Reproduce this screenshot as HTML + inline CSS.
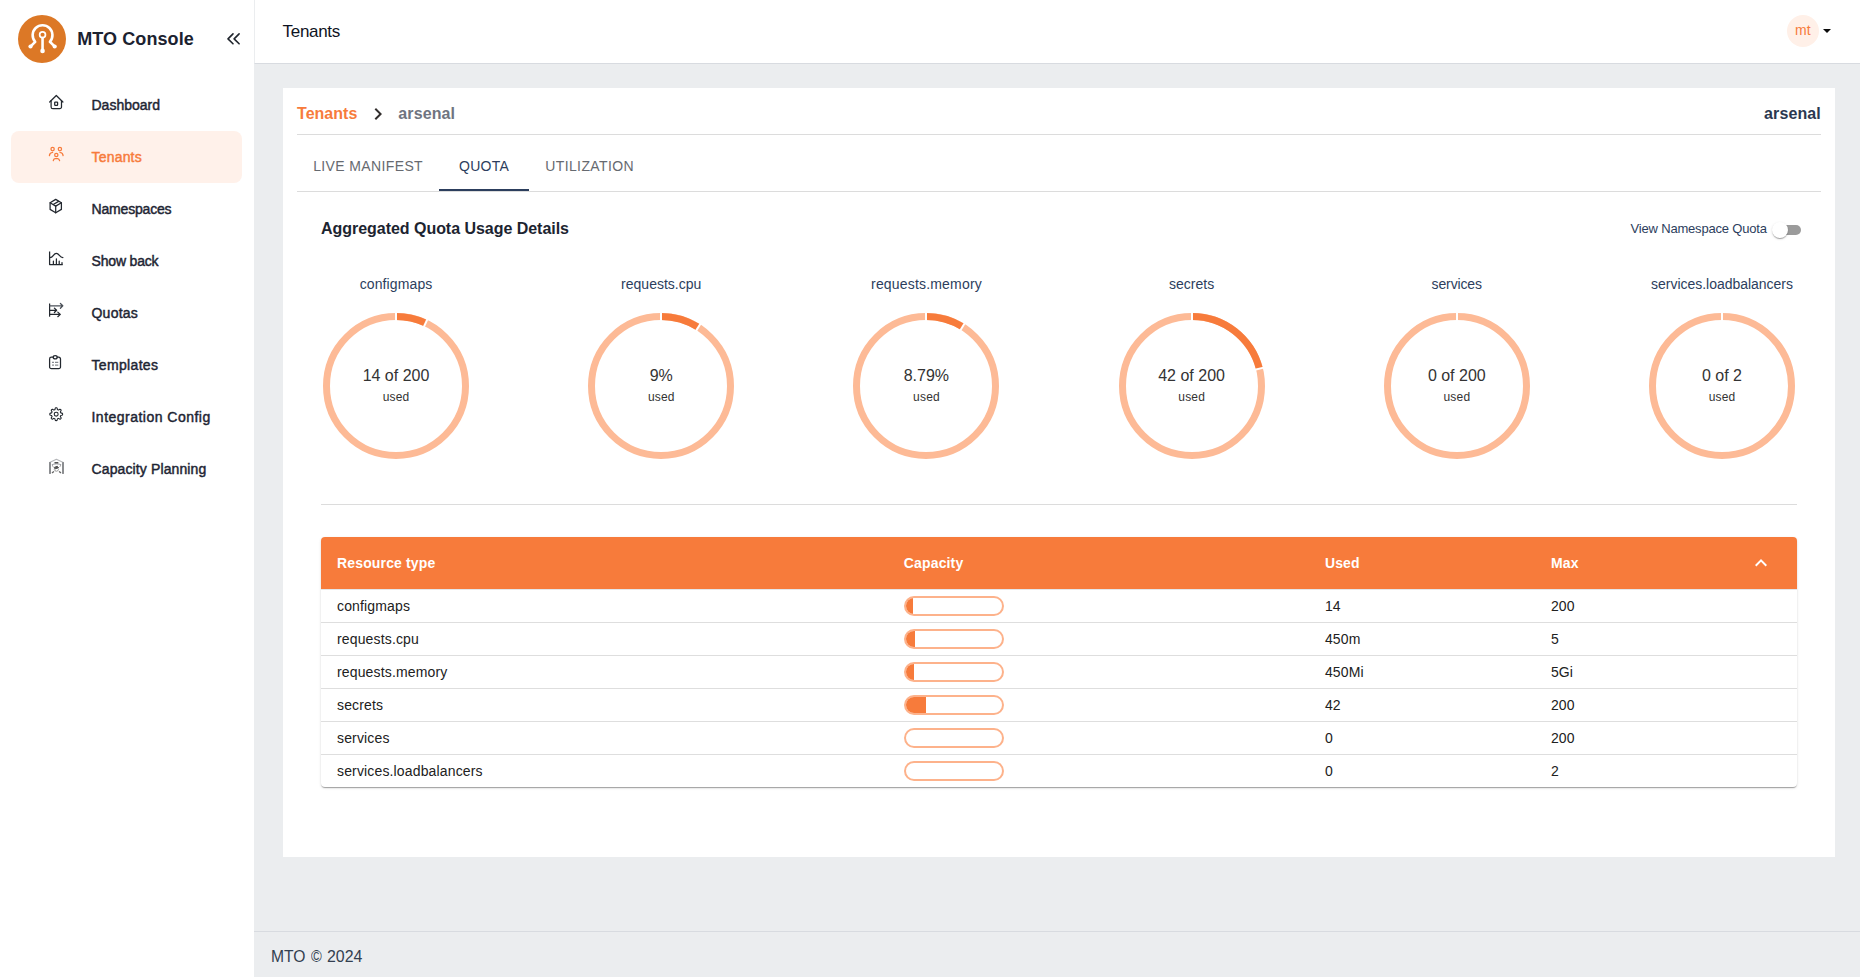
<!DOCTYPE html>
<html lang="en">
<head>
<meta charset="utf-8">
<title>MTO Console</title>
<style>
*{box-sizing:border-box;margin:0;padding:0}
html,body{width:1860px;height:977px;overflow:hidden}
body{font-family:"Liberation Sans",sans-serif;background:#ebedef;color:#1f2937;position:relative}
.abs{position:absolute}
.t{position:absolute;white-space:nowrap;line-height:1}
#sidebar{position:absolute;left:0;top:0;width:254px;height:977px;background:#fff}
#logo{position:absolute;left:18px;top:15px;width:48px;height:48px}
#navactive{position:absolute;left:11px;top:131px;width:231px;height:52px;border-radius:8px;background:#fff1ea}
#header{position:absolute;left:254px;top:0;width:1606px;height:64px;background:#fff;border-bottom:1px solid #d8dbe0;border-left:1px solid #ebedef}
#avatar{position:absolute;left:1787px;top:15px;width:32px;height:32px;border-radius:50%;background:#fff0e8}
#caret{position:absolute;left:1822.7px;top:29px;width:0;height:0;border-left:4.2px solid transparent;border-right:4.2px solid transparent;border-top:4.2px solid #0b0b0b}
#footer{position:absolute;left:254px;top:931px;width:1606px;height:46px;border-top:1px solid #d8dbe0}
#card{position:absolute;left:283px;top:88px;width:1552px;height:769px;background:#fff}
.hr{position:absolute;height:1px;background:#dcdcdc}
#ind{position:absolute;left:439px;top:189px;width:90px;height:2px;background:#2c3e5d}
#track{position:absolute;left:1775px;top:225px;width:26px;height:10px;border-radius:5px;background:#9b9b9b}
#thumb{position:absolute;left:1772px;top:222px;width:16px;height:16px;border-radius:50%;background:#fff;box-shadow:0 2px 1px -1px rgba(0,0,0,.2),0 1px 1px 0 rgba(0,0,0,.14),0 1px 3px 0 rgba(0,0,0,.12)}
#table{position:absolute;left:321px;top:537px;width:1476px;height:250px;background:#fff;border-radius:4px;box-shadow:0 2px 1px -1px rgba(0,0,0,.2),0 1px 1px 0 rgba(0,0,0,.14),0 1px 3px 0 rgba(0,0,0,.12);overflow:hidden}
#thead{position:absolute;left:0;top:0;width:1476px;height:52px;background:#f77b3b}
.rl{position:absolute;left:0;width:1476px;height:1px;background:#dedede}
.bar{position:absolute;left:904px;width:100px;height:20px;border:2px solid #fdb28b;border-radius:10px;overflow:hidden;background:#fff}
</style>
</head>
<body>
<div id="sidebar"></div>
<svg id="logo" viewBox="0 0 48 48"><circle cx="24" cy="24" r="24" fill="#dc7826"/><g fill="none" stroke="#fff" stroke-linecap="round" stroke-linejoin="round"><path d="M12.6 31.4L17.2 26.8A9.9 9.9 0 1 1 31.9 26.8L36.6 31.4" stroke-width="2.6"/><circle cx="24.55" cy="19.8" r="2.9" stroke-width="1.7"/><path d="M24.55 23V35.6" stroke-width="2.6"/></g><g fill="#fff"><circle cx="12.5" cy="31.5" r="2.1"/><circle cx="36.7" cy="31.5" r="2.1"/><circle cx="24.55" cy="35.9" r="2.3"/></g></svg>
<svg class="abs" style="left:226px;top:32px" width="16" height="14" viewBox="0 0 16 14" fill="none" stroke="#20252d" stroke-width="1.6" stroke-linecap="round" stroke-linejoin="round"><path d="M7 1.9L2 6.85L7 11.8"/><path d="M13.1 1.9L8.1 6.85L13.1 11.8"/></svg>
<div id="navactive"></div>
<svg class="abs" style="left:0;top:0" width="254" height="500" viewBox="0 0 254 500" fill="none" stroke-linecap="round" stroke-linejoin="round"><g stroke="#23282f" stroke-width="1.25"><path d="M49.7 102L56.3 95.5L62.9 102"/><path d="M51.1 100.6V106.9a1.8 1.8 0 0 0 1.8 1.8h6.8a1.8 1.8 0 0 0 1.8-1.8V100.6"/><rect x="54.7" y="102" width="2.9" height="3.3" rx="0.6"/></g><g stroke="#f77b3b" stroke-width="1.25"><circle cx="52.6" cy="149.1" r="1.65"/><circle cx="59.9" cy="149.1" r="1.65"/><circle cx="56.3" cy="154.9" r="1.65"/><path d="M49.4 155.6a3.3 3.3 0 0 1 3.2-3.1"/><path d="M60 152.5a3.3 3.3 0 0 1 3.1 3.1"/><path d="M53.3 160.7C53.5 159.2 54 158.5 55 158.5H57.7C58.7 158.5 59.3 159.2 59.6 160.7"/></g><g stroke="#23282f" stroke-width="1.25"><path d="M55.7 199.4L61.4 202.8V209.4L55.7 212.8L50.1 209.4V202.8Z"/><path d="M50.1 202.8L55.7 206.1L61.4 202.8"/><path d="M55.7 206.1V212.8"/><path d="M53.6 204.3L58.6 201.4"/></g><g stroke="#23282f" stroke-width="1.25"><path d="M49.6 251.6V264.6H62.7" stroke-linecap="butt"/><path d="M49.8 257.6C53.6 257.6 53.2 253.4 56.3 253.4C59.4 253.4 59.4 257.6 62.9 257.6"/><path d="M53.4 261.2V264.2M56.4 258.8V264.2M59.2 261.2V264.2M62 262.6V264.2"/></g><g stroke="#23282f" stroke-width="1.25"><path d="M49.6 303.5V316.7" stroke-linecap="butt"/><path d="M50 305.8H62.6M60.4 303.5L62.8 305.8L60.4 308.3" stroke="#4b5058"/><path d="M50 310.3H56.4M54.4 308.1L56.6 310.3L54.4 312.5"/><path d="M50 314.4H60.2M57.8 312.1L60.3 314.4L57.8 316.7"/></g><g stroke="#23282f" stroke-width="1.25"><path d="M53.2 357.2H51.4a1.8 1.8 0 0 0-1.8 1.8v7.9a1.8 1.8 0 0 0 1.8 1.8h7.3a1.8 1.8 0 0 0 1.8-1.8v-7.9a1.8 1.8 0 0 0-1.8-1.8H57.2"/><ellipse cx="55.2" cy="357.2" rx="2" ry="1.7"/><path d="M52.4 362.3H53.6M55.4 362.3H57.9M52.4 365.1H53.6M55.4 365.1H57.9" stroke-width="1" stroke="#6a6f76"/></g><g stroke="#23282f" stroke-width="1.08"><path d="M56.20 407.80L56.62 407.81L57.02 407.98L57.28 408.76L57.45 409.54L57.71 409.75L58.00 409.86L58.28 409.98L58.61 410.02L59.28 409.59L60.02 409.22L60.42 409.39L60.73 409.67L61.01 409.98L61.18 410.38L60.81 411.12L60.38 411.79L60.42 412.12L60.54 412.40L60.65 412.69L60.86 412.95L61.64 413.12L62.42 413.38L62.59 413.78L62.60 414.20L62.59 414.62L62.42 415.02L61.64 415.28L60.86 415.45L60.65 415.71L60.54 416.00L60.42 416.28L60.38 416.61L60.81 417.28L61.18 418.02L61.01 418.42L60.73 418.73L60.42 419.01L60.02 419.18L59.28 418.81L58.61 418.38L58.28 418.42L58.00 418.54L57.71 418.65L57.45 418.86L57.28 419.64L57.02 420.42L56.62 420.59L56.20 420.60L55.78 420.59L55.38 420.42L55.12 419.64L54.95 418.86L54.69 418.65L54.40 418.54L54.12 418.42L53.79 418.38L53.12 418.81L52.38 419.18L51.98 419.01L51.67 418.73L51.39 418.42L51.22 418.02L51.59 417.28L52.02 416.61L51.98 416.28L51.86 416.00L51.75 415.71L51.54 415.45L50.76 415.28L49.98 415.02L49.81 414.62L49.80 414.20L49.81 413.78L49.98 413.38L50.76 413.12L51.54 412.95L51.75 412.69L51.86 412.40L51.98 412.12L52.02 411.79L51.59 411.12L51.22 410.38L51.39 409.98L51.67 409.67L51.98 409.39L52.38 409.22L53.12 409.59L53.79 410.02L54.12 409.98L54.40 409.86L54.69 409.75L54.95 409.54L55.12 408.76L55.38 407.98L55.78 407.81Z" stroke-linejoin="round"/><circle cx="56.2" cy="414.2" r="1.95"/></g><g stroke="#77797d" stroke-width="1.2"><path d="M49.6 462.4L56.4 459.3L63.3 462.4" stroke="#b4b6b9" stroke-width="1.1"/><path d="M50 462.8V473.2" stroke-width="1.7"/><path d="M63 462.8V473.2" stroke-width="1.7"/><path d="M52.2 464.6C54 463.6 59 463.6 60.8 464.6" stroke="#9a9da2" stroke-width="1"/><path d="M55 462.8H57.8" stroke-width="1.4" stroke="#555"/><path d="M54.4 467.4L57.2 466.2L58.6 467.8L55.4 468.8Z" fill="#555" stroke="#555" stroke-width="1"/><path d="M54.2 469.6a2.3 2.3 0 0 0 4.4 0" stroke="#999" stroke-width="1"/><path d="M52.4 472.6L53.6 471.8M60.6 472.6L59.4 471.8" stroke="#666" stroke-width="1.3"/><path d="M52.4 465.2L53 466.6M60.6 465.2L60 466.6" stroke="#aaa" stroke-width="1"/></g></svg>
<div id="header"></div>
<div id="avatar"></div>
<div id="caret"></div>
<div id="card"></div>
<div id="footer"></div>
<div class="hr" style="left:297px;top:134px;width:1524px"></div>
<svg class="abs" style="left:366.2px;top:102px" width="24" height="24" viewBox="0 0 24 24"><path fill="#322e2d" d="M10 6 8.59 7.41 13.17 12l-4.58 4.59L10 18l6-6z"/></svg>
<div class="hr" style="left:297px;top:191px;width:1524px"></div>
<div id="ind"></div>
<div id="track"></div><div id="thumb"></div>
<svg class="abs" style="left:316.0px;top:305.7px" width="160" height="160" viewBox="0 0 160 160"><circle cx="80" cy="80" r="69.5" fill="none" stroke="#fdba96" stroke-width="7"/><path d="M80.00 10.50A69.5 69.5 0 0 1 109.59 17.11" fill="none" stroke="#f77b3b" stroke-width="7"/><line x1="80.00" y1="15.00" x2="80.00" y2="6.00" stroke="#fff" stroke-width="2"/><line x1="107.68" y1="21.19" x2="111.51" y2="13.04" stroke="#fff" stroke-width="2"/></svg><svg class="abs" style="left:581.2px;top:305.7px" width="160" height="160" viewBox="0 0 160 160"><circle cx="80" cy="80" r="69.5" fill="none" stroke="#fdba96" stroke-width="7"/><path d="M80.00 10.50A69.5 69.5 0 0 1 117.24 21.32" fill="none" stroke="#f77b3b" stroke-width="7"/><line x1="80.00" y1="15.00" x2="80.00" y2="6.00" stroke="#fff" stroke-width="2"/><line x1="114.83" y1="25.12" x2="119.65" y2="17.52" stroke="#fff" stroke-width="2"/></svg><svg class="abs" style="left:846.4px;top:305.7px" width="160" height="160" viewBox="0 0 160 160"><circle cx="80" cy="80" r="69.5" fill="none" stroke="#fdba96" stroke-width="7"/><path d="M80.00 10.50A69.5 69.5 0 0 1 116.46 20.83" fill="none" stroke="#f77b3b" stroke-width="7"/><line x1="80.00" y1="15.00" x2="80.00" y2="6.00" stroke="#fff" stroke-width="2"/><line x1="114.10" y1="24.66" x2="118.82" y2="17.00" stroke="#fff" stroke-width="2"/></svg><svg class="abs" style="left:1111.6px;top:305.7px" width="160" height="160" viewBox="0 0 160 160"><circle cx="80" cy="80" r="69.5" fill="none" stroke="#fdba96" stroke-width="7"/><path d="M80.00 10.50A69.5 69.5 0 0 1 147.32 62.72" fill="none" stroke="#f77b3b" stroke-width="7"/><line x1="80.00" y1="15.00" x2="80.00" y2="6.00" stroke="#fff" stroke-width="2"/><line x1="142.96" y1="63.84" x2="151.68" y2="61.60" stroke="#fff" stroke-width="2"/></svg><svg class="abs" style="left:1376.8px;top:305.7px" width="160" height="160" viewBox="0 0 160 160"><circle cx="80" cy="80" r="69.5" fill="none" stroke="#fdba96" stroke-width="7"/><line x1="80.00" y1="15.00" x2="80.00" y2="6.00" stroke="#fff" stroke-width="2"/></svg><svg class="abs" style="left:1642.0px;top:305.7px" width="160" height="160" viewBox="0 0 160 160"><circle cx="80" cy="80" r="69.5" fill="none" stroke="#fdba96" stroke-width="7"/><line x1="80.00" y1="15.00" x2="80.00" y2="6.00" stroke="#fff" stroke-width="2"/></svg>
<div class="hr" style="left:321px;top:504px;width:1476px"></div>
<div id="table"><div id="thead"></div>
<div class="rl" style="top:85px"></div><div class="rl" style="top:118px"></div><div class="rl" style="top:151px"></div><div class="rl" style="top:184px"></div><div class="rl" style="top:217px"></div>
<div class="rl" style="top:52px;background:#e4e6e8"></div>
</div>
<svg class="abs" style="left:1749px;top:551px" width="24" height="24" viewBox="0 0 24 24"><path fill="#fff" d="M7.41 15.41 12 10.83l4.59 4.58L18 14l-6-6-6 6z"/></svg>
<div class="bar" style="top:596px"><div style="position:absolute;left:0;top:0;height:16px;width:6.72px;background:#f77b3b"></div></div>
<div class="bar" style="top:629px"><div style="position:absolute;left:0;top:0;height:16px;width:8.64px;background:#f77b3b"></div></div>
<div class="bar" style="top:662px"><div style="position:absolute;left:0;top:0;height:16px;width:8.44px;background:#f77b3b"></div></div>
<div class="bar" style="top:695px"><div style="position:absolute;left:0;top:0;height:16px;width:20.16px;background:#f77b3b"></div></div>
<div class="bar" style="top:728px"></div>
<div class="bar" style="top:761px"></div>
<div class="t" style="left:77.30px;top:30px;font-size:18px;color:#1b2230;font-weight:700;letter-spacing:0.081px;">MTO Console</div>
<div class="t" style="left:91.50px;top:98px;font-size:14px;color:#1e2533;-webkit-text-stroke:0.45px #1e2533;">Dashboard</div>
<div class="t" style="left:91.50px;top:150px;font-size:14px;color:#f77b3b;letter-spacing:0.192px;-webkit-text-stroke:0.45px #f77b3b;">Tenants</div>
<div class="t" style="left:91.50px;top:202px;font-size:14px;color:#1e2533;letter-spacing:-0.178px;-webkit-text-stroke:0.45px #1e2533;">Namespaces</div>
<div class="t" style="left:91.50px;top:254px;font-size:14px;color:#1e2533;letter-spacing:-0.173px;-webkit-text-stroke:0.45px #1e2533;">Show back</div>
<div class="t" style="left:91.50px;top:306px;font-size:14px;color:#1e2533;letter-spacing:0.232px;-webkit-text-stroke:0.45px #1e2533;">Quotas</div>
<div class="t" style="left:91.50px;top:358px;font-size:14px;color:#1e2533;letter-spacing:0.336px;-webkit-text-stroke:0.45px #1e2533;">Templates</div>
<div class="t" style="left:91.50px;top:410px;font-size:14px;color:#1e2533;letter-spacing:0.481px;-webkit-text-stroke:0.45px #1e2533;">Integration Config</div>
<div class="t" style="left:91.50px;top:462px;font-size:14px;color:#1e2533;letter-spacing:0.121px;-webkit-text-stroke:0.45px #1e2533;">Capacity Planning</div>
<div class="t" style="left:282.60px;top:23px;font-size:17px;color:#0e1322;letter-spacing:-0.324px;">Tenants</div>
<div class="t" style="left:1795.00px;top:23px;font-size:14px;color:#f77b3b;letter-spacing:0.037px;">mt</div>
<div class="t" style="left:271.00px;top:948px;font-size:17px;color:#333f50;transform:scaleX(0.9208);transform-origin:0 0;">MTO</div>
<div class="t" style="left:310.60px;top:948px;font-size:17px;color:#333f50;transform:scaleX(0.8618);transform-origin:0 0;">©</div>
<div class="t" style="left:326.80px;top:948px;font-size:17px;color:#333f50;transform:scaleX(0.9358);transform-origin:0 0;">2024</div>
<div class="t" style="left:297.10px;top:106px;font-size:16px;color:#f77b3b;font-weight:700;letter-spacing:0.007px;">Tenants</div>
<div class="t" style="left:398.30px;top:106px;font-size:16px;color:#6f7480;font-weight:700;letter-spacing:0.109px;">arsenal</div>
<div class="t" style="left:1764.00px;top:106px;font-size:16px;color:#2b3850;font-weight:700;letter-spacing:0.126px;">arsenal</div>
<div class="t" style="left:313.20px;top:159px;font-size:14px;color:#666a70;letter-spacing:0.372px;">LIVE MANIFEST</div>
<div class="t" style="left:459.10px;top:159px;font-size:14px;color:#2c3e5d;letter-spacing:0.238px;">QUOTA</div>
<div class="t" style="left:545.20px;top:159px;font-size:14px;color:#666a70;letter-spacing:0.397px;">UTILIZATION</div>
<div class="t" style="left:321.00px;top:221px;font-size:16px;color:#1c2430;font-weight:700;letter-spacing:-0.033px;">Aggregated Quota Usage Details</div>
<div class="t" style="left:1630.60px;top:222px;font-size:13px;color:#2c3e5d;letter-spacing:-0.192px;">View Namespace Quota</div>
<div class="t" style="left:359.65px;top:277px;font-size:14px;color:#2c3e5d;letter-spacing:0.123px;">configmaps</div>
<div class="t" style="left:362.63px;top:368px;font-size:16px;color:#333;">14 of 200</div>
<div class="t" style="left:382.70px;top:391px;font-size:12px;color:#333;letter-spacing:0.19px;">used</div>
<div class="t" style="left:621.10px;top:277px;font-size:14px;color:#2c3e5d;letter-spacing:0.003px;">requests.cpu</div>
<div class="t" style="left:649.64px;top:368px;font-size:16px;color:#333;">9%</div>
<div class="t" style="left:647.90px;top:391px;font-size:12px;color:#333;letter-spacing:0.19px;">used</div>
<div class="t" style="left:871.05px;top:277px;font-size:14px;color:#2c3e5d;letter-spacing:0.182px;">requests.memory</div>
<div class="t" style="left:903.71px;top:368px;font-size:16px;color:#333;">8.79%</div>
<div class="t" style="left:913.10px;top:391px;font-size:12px;color:#333;letter-spacing:0.19px;">used</div>
<div class="t" style="left:1169.00px;top:277px;font-size:14px;color:#2c3e5d;letter-spacing:0.013px;">secrets</div>
<div class="t" style="left:1158.23px;top:368px;font-size:16px;color:#333;">42 of 200</div>
<div class="t" style="left:1178.30px;top:391px;font-size:12px;color:#333;letter-spacing:0.19px;">used</div>
<div class="t" style="left:1431.55px;top:277px;font-size:14px;color:#2c3e5d;letter-spacing:-0.123px;">services</div>
<div class="t" style="left:1427.89px;top:368px;font-size:16px;color:#333;">0 of 200</div>
<div class="t" style="left:1443.50px;top:391px;font-size:12px;color:#333;letter-spacing:0.19px;">used</div>
<div class="t" style="left:1651.10px;top:277px;font-size:14px;color:#2c3e5d;letter-spacing:-0.029px;">services.loadbalancers</div>
<div class="t" style="left:1701.98px;top:368px;font-size:16px;color:#333;">0 of 2</div>
<div class="t" style="left:1708.70px;top:391px;font-size:12px;color:#333;letter-spacing:0.19px;">used</div>
<div class="t" style="left:337.00px;top:556px;font-size:14px;color:#fff;font-weight:700;letter-spacing:0.15px;">Resource type</div>
<div class="t" style="left:903.80px;top:556px;font-size:14px;color:#fff;font-weight:700;letter-spacing:0.15px;">Capacity</div>
<div class="t" style="left:1324.90px;top:556px;font-size:14px;color:#fff;font-weight:700;letter-spacing:0.15px;">Used</div>
<div class="t" style="left:1550.90px;top:556px;font-size:14px;color:#fff;font-weight:700;letter-spacing:0.15px;">Max</div>
<div class="t" style="left:337.00px;top:599px;font-size:14px;color:#212121;letter-spacing:0.15px;">configmaps</div>
<div class="t" style="left:1324.90px;top:599px;font-size:14px;color:#212121;letter-spacing:0.15px;">14</div>
<div class="t" style="left:1550.90px;top:599px;font-size:14px;color:#212121;letter-spacing:0.15px;">200</div>
<div class="t" style="left:337.00px;top:632px;font-size:14px;color:#212121;letter-spacing:0.15px;">requests.cpu</div>
<div class="t" style="left:1324.90px;top:632px;font-size:14px;color:#212121;letter-spacing:0.15px;">450m</div>
<div class="t" style="left:1550.90px;top:632px;font-size:14px;color:#212121;letter-spacing:0.15px;">5</div>
<div class="t" style="left:337.00px;top:665px;font-size:14px;color:#212121;letter-spacing:0.15px;">requests.memory</div>
<div class="t" style="left:1324.90px;top:665px;font-size:14px;color:#212121;letter-spacing:0.15px;">450Mi</div>
<div class="t" style="left:1550.90px;top:665px;font-size:14px;color:#212121;letter-spacing:0.15px;">5Gi</div>
<div class="t" style="left:337.00px;top:698px;font-size:14px;color:#212121;letter-spacing:0.15px;">secrets</div>
<div class="t" style="left:1324.90px;top:698px;font-size:14px;color:#212121;letter-spacing:0.15px;">42</div>
<div class="t" style="left:1550.90px;top:698px;font-size:14px;color:#212121;letter-spacing:0.15px;">200</div>
<div class="t" style="left:337.00px;top:731px;font-size:14px;color:#212121;letter-spacing:0.15px;">services</div>
<div class="t" style="left:1324.90px;top:731px;font-size:14px;color:#212121;letter-spacing:0.15px;">0</div>
<div class="t" style="left:1550.90px;top:731px;font-size:14px;color:#212121;letter-spacing:0.15px;">200</div>
<div class="t" style="left:337.00px;top:764px;font-size:14px;color:#212121;letter-spacing:0.15px;">services.loadbalancers</div>
<div class="t" style="left:1324.90px;top:764px;font-size:14px;color:#212121;letter-spacing:0.15px;">0</div>
<div class="t" style="left:1550.90px;top:764px;font-size:14px;color:#212121;letter-spacing:0.15px;">2</div>
</body>
</html>
